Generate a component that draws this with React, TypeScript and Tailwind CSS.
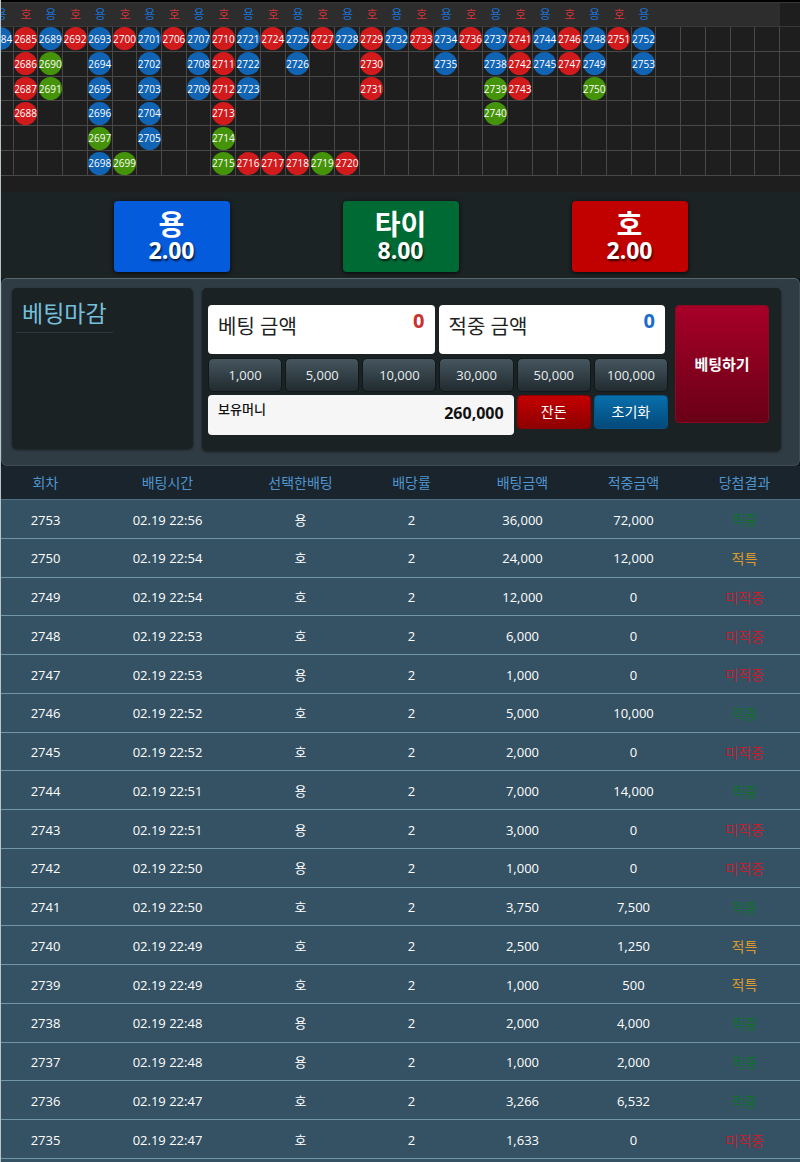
import React, { useState } from 'react';
import clsx from 'clsx';

type Tone = 'blue' | 'red' | 'green';
type Result = '적중' | '적특' | '미적중';

interface Bead {
  no: number;
  tone: Tone;
}

interface Bet {
  round: number;
  time: string;
  pick: '용' | '호';
  stake: number;
  win: number;
  result: Result;
}

const ROWS = 6;
const COLUMNS = 32;

const toneStyle: Record<Tone, string> = {
  blue: 'bg-[#1163b3]',
  red: 'bg-[#d11a1c]',
  green: 'bg-[#459309]',
};

const resultStyle: Record<Result, string> = {
  적중: 'text-[#10702c]',
  적특: 'text-[#dc9a2c]',
  미적중: 'text-[#c01f30]',
};

const run = (from: number, to: number, tone: Tone): Bead[] =>
  Array.from({ length: to - from + 1 }, (_, i) => ({ no: from + i, tone }));

// One entry per column, from the top cell down
const streaks: Bead[][] = [
  run(2684, 2684, 'blue'),
  run(2685, 2688, 'red'),
  [...run(2689, 2689, 'blue'), ...run(2690, 2691, 'green')],
  run(2692, 2692, 'red'),
  [...run(2693, 2696, 'blue'), ...run(2697, 2697, 'green'), ...run(2698, 2698, 'blue')],
  run(2700, 2700, 'red'),
  run(2701, 2705, 'blue'),
  run(2706, 2706, 'red'),
  run(2707, 2709, 'blue'),
  [...run(2710, 2713, 'red'), ...run(2714, 2715, 'green')],
  run(2721, 2723, 'blue'),
  run(2724, 2724, 'red'),
  run(2725, 2726, 'blue'),
  run(2727, 2727, 'red'),
  run(2728, 2728, 'blue'),
  run(2729, 2731, 'red'),
  run(2732, 2732, 'blue'),
  run(2733, 2733, 'red'),
  run(2734, 2735, 'blue'),
  run(2736, 2736, 'red'),
  [...run(2737, 2738, 'blue'), ...run(2739, 2740, 'green')],
  run(2741, 2743, 'red'),
  run(2744, 2745, 'blue'),
  run(2746, 2747, 'red'),
  [...run(2748, 2749, 'blue'), ...run(2750, 2750, 'green')],
  run(2751, 2751, 'red'),
  run(2752, 2753, 'blue'),
];

// Long streaks turn right along the bottom row
const tail: Record<number, Bead> = {
  5: { no: 2699, tone: 'green' },
  10: { no: 2716, tone: 'red' },
  11: { no: 2717, tone: 'red' },
  12: { no: 2718, tone: 'red' },
  13: { no: 2719, tone: 'green' },
  14: { no: 2720, tone: 'red' },
};

const beadAt = (col: number, row: number): Bead | undefined =>
  streaks[col]?.[row] ?? (row === ROWS - 1 ? tail[col] : undefined);

const odds = [
  { name: '용', rate: '2.00', style: 'bg-[#045bdb]' },
  { name: '타이', rate: '8.00', style: 'bg-[#006a35]' },
  { name: '호', rate: '2.00', style: 'bg-[#c10000]' },
];

const chips = [1000, 5000, 10000, 30000, 50000, 100000];

const headers = ['회차', '배팅시간', '선택한배팅', '배당률', '배팅금액', '적중금액', '당첨결과'];

const bets: Bet[] = [
  { round: 2753, time: '02.19 22:56', pick: '용', stake: 36000, win: 72000, result: '적중' },
  { round: 2750, time: '02.19 22:54', pick: '호', stake: 24000, win: 12000, result: '적특' },
  { round: 2749, time: '02.19 22:54', pick: '호', stake: 12000, win: 0, result: '미적중' },
  { round: 2748, time: '02.19 22:53', pick: '호', stake: 6000, win: 0, result: '미적중' },
  { round: 2747, time: '02.19 22:53', pick: '용', stake: 1000, win: 0, result: '미적중' },
  { round: 2746, time: '02.19 22:52', pick: '호', stake: 5000, win: 10000, result: '적중' },
  { round: 2745, time: '02.19 22:52', pick: '호', stake: 2000, win: 0, result: '미적중' },
  { round: 2744, time: '02.19 22:51', pick: '용', stake: 7000, win: 14000, result: '적중' },
  { round: 2743, time: '02.19 22:51', pick: '용', stake: 3000, win: 0, result: '미적중' },
  { round: 2742, time: '02.19 22:50', pick: '용', stake: 1000, win: 0, result: '미적중' },
  { round: 2741, time: '02.19 22:50', pick: '호', stake: 3750, win: 7500, result: '적중' },
  { round: 2740, time: '02.19 22:49', pick: '호', stake: 2500, win: 1250, result: '적특' },
  { round: 2739, time: '02.19 22:49', pick: '호', stake: 1000, win: 500, result: '적특' },
  { round: 2738, time: '02.19 22:48', pick: '용', stake: 2000, win: 4000, result: '적중' },
  { round: 2737, time: '02.19 22:48', pick: '용', stake: 1000, win: 2000, result: '적중' },
  { round: 2736, time: '02.19 22:47', pick: '호', stake: 3266, win: 6532, result: '적중' },
  { round: 2735, time: '02.19 22:47', pick: '호', stake: 1633, win: 0, result: '미적중' },
];

const money = (n: number) => n.toLocaleString('en-US');

const RoadMap: React.FC = () => (
  <div className="overflow-hidden bg-[#1e1e1e] border-t-2 border-black pb-4">
    <table className="table-fixed border-separate border-spacing-0 -ml-3 w-[calc(100%+12px)] h-[174px]">
      <thead>
        <tr className="h-[25px]">
          {Array.from({ length: COLUMNS }, (_, col) => (
            <th
              key={col}
              className={clsx(
                'p-0 text-xs leading-5 font-normal bg-[#2d2d2d] border-y border-[#383838]',
                col % 2 === 0 ? 'text-[#1b74d8]' : 'text-[#d8343a]'
              )}
            >
              {col < streaks.length && (col % 2 === 0 ? '용' : '호')}
            </th>
          ))}
          <th className="w-5 p-0 border-y border-[#383838]" />
        </tr>
      </thead>
      <tbody>
        {Array.from({ length: ROWS }, (_, row) => (
          <tr key={row}>
            {Array.from({ length: COLUMNS }, (_, col) => {
              const bead = beadAt(col, row);
              return (
                <td key={col} className="p-0 border-r border-b border-[#484848]">
                  {bead && (
                    <span
                      className={clsx(
                        'flex items-center justify-center mx-auto w-[23px] h-[23px] pt-px rounded-full text-[10px] text-white',
                        toneStyle[bead.tone]
                      )}
                    >
                      {bead.no}
                    </span>
                  )}
                </td>
              );
            })}
            <td className="p-0 border-b border-[#484848]" />
          </tr>
        ))}
      </tbody>
    </table>
  </div>
);

const OddsBar: React.FC = () => (
  <div className="grid grid-cols-3 justify-items-center px-14 pt-[9px] pb-1.5 bg-[#1c2325]">
    {odds.map((o) => (
      <button
        key={o.name}
        className={clsx(
          'w-[116px] pt-[9px] pb-2.5 rounded-[4px] font-bold text-white shadow-[0_1px_4px_rgba(0,0,0,0.8)]',
          o.style
        )}
      >
        <span className="block text-[28px] leading-7">{o.name}</span>
        <span className="block text-[23px] leading-6 [text-shadow:1px_2px_2px_rgba(0,0,0,0.7)]">{o.rate}</span>
      </button>
    ))}
  </div>
);

const AmountBox: React.FC<{ id: string; label: string; value: number; color: string }> = ({ id, label, value, color }) => (
  <div className="flex items-start justify-between h-[49px] px-2.5 rounded-[4px] bg-white">
    <label htmlFor={id} className="shrink-0 text-xl leading-[44px] text-[#222]">
      {label}
    </label>
    <input
      id={id}
      readOnly
      value={money(value)}
      className={clsx('w-24 h-[30px] bg-transparent text-right text-xl font-bold outline-none', color)}
    />
  </div>
);

const BetPanel: React.FC = () => {
  const [amount, setAmount] = useState(0);

  return (
    <div className="flex items-start gap-[9px] pt-[9px] pb-[14px] pl-[10px] pr-[18px] rounded-md border border-t-[#55696f] border-[#3c4d54] bg-[#303c44]">
      <div className="w-[181px] h-[161px] shrink-0 pl-1 pt-2 rounded-[5px] bg-[#1b2224] shadow-[0_1px_3px_rgba(0,0,0,0.5)]">
        <h2 className="inline-block px-1.5 pt-px pb-[3px] text-[23px] leading-8 text-[#76bfdc] border-b border-[#2f363c]">베팅마감</h2>
      </div>

      <div className="flex flex-1 items-start gap-[7px] pt-[17px] pb-4 pl-1.5 pr-3 rounded-[5px] bg-[#1b2224] shadow-[0_1px_3px_rgba(0,0,0,0.5)]">
        <div className="flex-1">
          <div className="grid grid-cols-2 gap-1 pr-[3px]">
            <AmountBox id="stake" label="베팅 금액" value={amount} color="text-[#c8312f]" />
            <AmountBox id="payout" label="적중 금액" value={amount * 2} color="text-[#1a6bd0]" />
          </div>
          <div className="grid grid-cols-6 items-start gap-[3px] pt-1">
            {chips.map((chip) => (
              <button
                key={chip}
                onClick={() => setAmount(amount + chip)}
                className="h-[34px] pt-0.5 rounded-[5px] border border-[#11181b] bg-linear-to-b from-[#46565f] to-[#212b30] text-[13px] text-[#e6ecef]"
              >
                {money(chip)}
              </button>
            ))}
            <div className="col-span-4 flex items-start justify-between h-10 px-2.5 rounded-[4px] bg-[#f6f6f6] text-[#111]">
              <label htmlFor="balance" className="text-[13px] leading-[28px] font-medium">
                보유머니
              </label>
              <input
                id="balance"
                readOnly
                value={money(260000)}
                className="w-32 h-9 bg-transparent text-right text-base font-bold outline-none"
              />
            </div>
            <button className="h-[34px] rounded-[4px] border border-[#8b0000] bg-linear-to-b from-[#c40000] to-[#8e0000] text-sm text-white">
              잔돈
            </button>
            <button
              onClick={() => setAmount(0)}
              className="h-[34px] rounded-[4px] border border-[#075488] bg-linear-to-b from-[#0870ac] to-[#04497a] text-sm text-white"
            >
              초기화
            </button>
          </div>
        </div>
        <button className="w-[94px] h-[118px] rounded-[4px] border border-[#8a0a22] bg-linear-to-b from-[#a80028] to-[#690016] text-[15px] font-bold text-white">
          베팅하기
        </button>
      </div>
    </div>
  );
};

const BetHistory: React.FC = () => (
  <table className="table-fixed w-full h-[693px] border-separate border-spacing-0 text-center">
    <thead>
      <tr className="h-[34px] bg-[#1a242c]">
        {headers.map((h, i) => (
          <th
            key={h}
            className={clsx(
              'p-0 text-sm font-normal text-[#4f95d0] border-b border-[#4f6f82]',
              i === 0 && 'w-[89px]',
              i === 1 && 'w-[155px]'
            )}
          >
            {h}
          </th>
        ))}
      </tr>
    </thead>
    <tbody className="text-[13px] text-white [&_td]:px-0 [&_td]:pb-0 [&_td]:pt-[3px] [&_td]:border-b [&_td]:border-[#7196a8]">
      {bets.map((bet) => (
        <tr key={bet.round}>
          <td>{bet.round}</td>
          <td>{bet.time}</td>
          <td>{bet.pick}</td>
          <td>2</td>
          <td>{money(bet.stake)}</td>
          <td>{money(bet.win)}</td>
          <td className={clsx('text-sm', resultStyle[bet.result])}>{bet.result}</td>
        </tr>
      ))}
    </tbody>
  </table>
);

export default function App() {
  return (
    <main className="min-h-screen border-l border-[#b9c3c9] bg-[#355265] font-['Open_Sans','Noto_Sans_CJK_KR',sans-serif]">
      <RoadMap />
      <OddsBar />
      <div className="bg-[#12181b]">
        <BetPanel />
      </div>
      <BetHistory />
    </main>
  );
}
